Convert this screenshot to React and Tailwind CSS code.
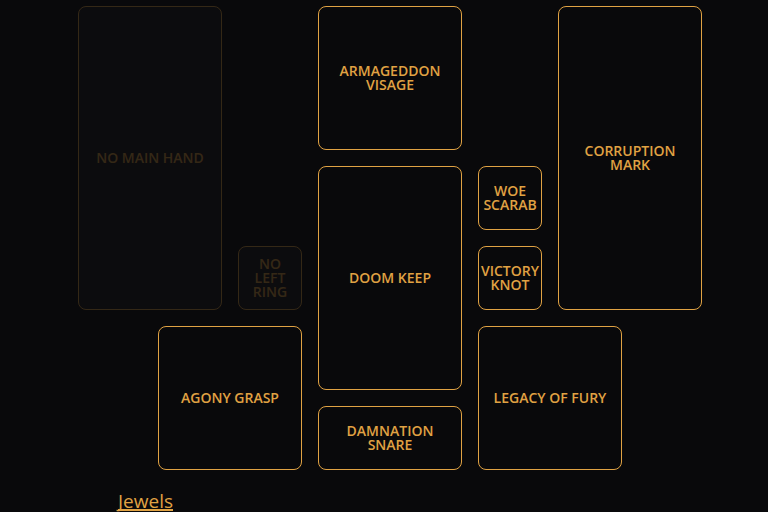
const slots = [
  { name: "NO MAIN HAND", place: "col-start-1 col-span-2 row-start-1 row-span-4", empty: true },
  { name: "ARMAGEDDON VISAGE", place: "col-start-4 col-span-2 row-start-1 row-span-2" },
  { name: "CORRUPTION MARK", place: "col-start-7 col-span-2 row-start-1 row-span-4" },
  { name: "DOOM KEEP", place: "col-start-4 col-span-2 row-start-3 row-span-3" },
  { name: "WOE SCARAB", place: "col-start-6 row-start-3" },
  { name: "NO LEFT RING", place: "col-start-3 row-start-4", empty: true },
  { name: "VICTORY KNOT", place: "col-start-6 row-start-4" },
  { name: "AGONY GRASP", place: "col-start-2 col-span-2 row-start-5 row-span-2" },
  { name: "LEGACY OF FURY", place: "col-start-6 col-span-2 row-start-5 row-span-2" },
  { name: "DAMNATION SNARE", place: "col-start-4 col-span-2 row-start-6" },
];

function Slot({ name, place, empty }) {
  return (
    <button
      type="button"
      disabled={empty}
      className={`flex items-center justify-center rounded-lg border border-[#e0a243] px-2 text-center text-sm leading-[14px] font-semibold ${place} ${
        empty ? "bg-zinc-900 opacity-20" : ""
      }`}
    >
      <span>{name}</span>
    </button>
  );
}

export default function App() {
  return (
    <main className="min-h-screen bg-[#09090b] pt-1.5 pr-3 font-['Open_Sans','Noto_Sans',sans-serif] text-[#e0a243]">
      <div className="mx-auto w-fit pl-6">
        <section aria-label="Equipment" className="grid grid-cols-[repeat(8,64px)] grid-rows-[repeat(6,64px)] gap-4">
          {slots.map((slot) => (
            <Slot key={slot.name} {...slot} />
          ))}
        </section>
        <h2 className="mt-5 pl-10 text-[19px] leading-[22px]">
          <a href="#jewels" className="inline-block underline decoration-2 underline-offset-1 [text-decoration-skip-ink:none]">Jewels</a>
        </h2>
      </div>
    </main>
  );
}
